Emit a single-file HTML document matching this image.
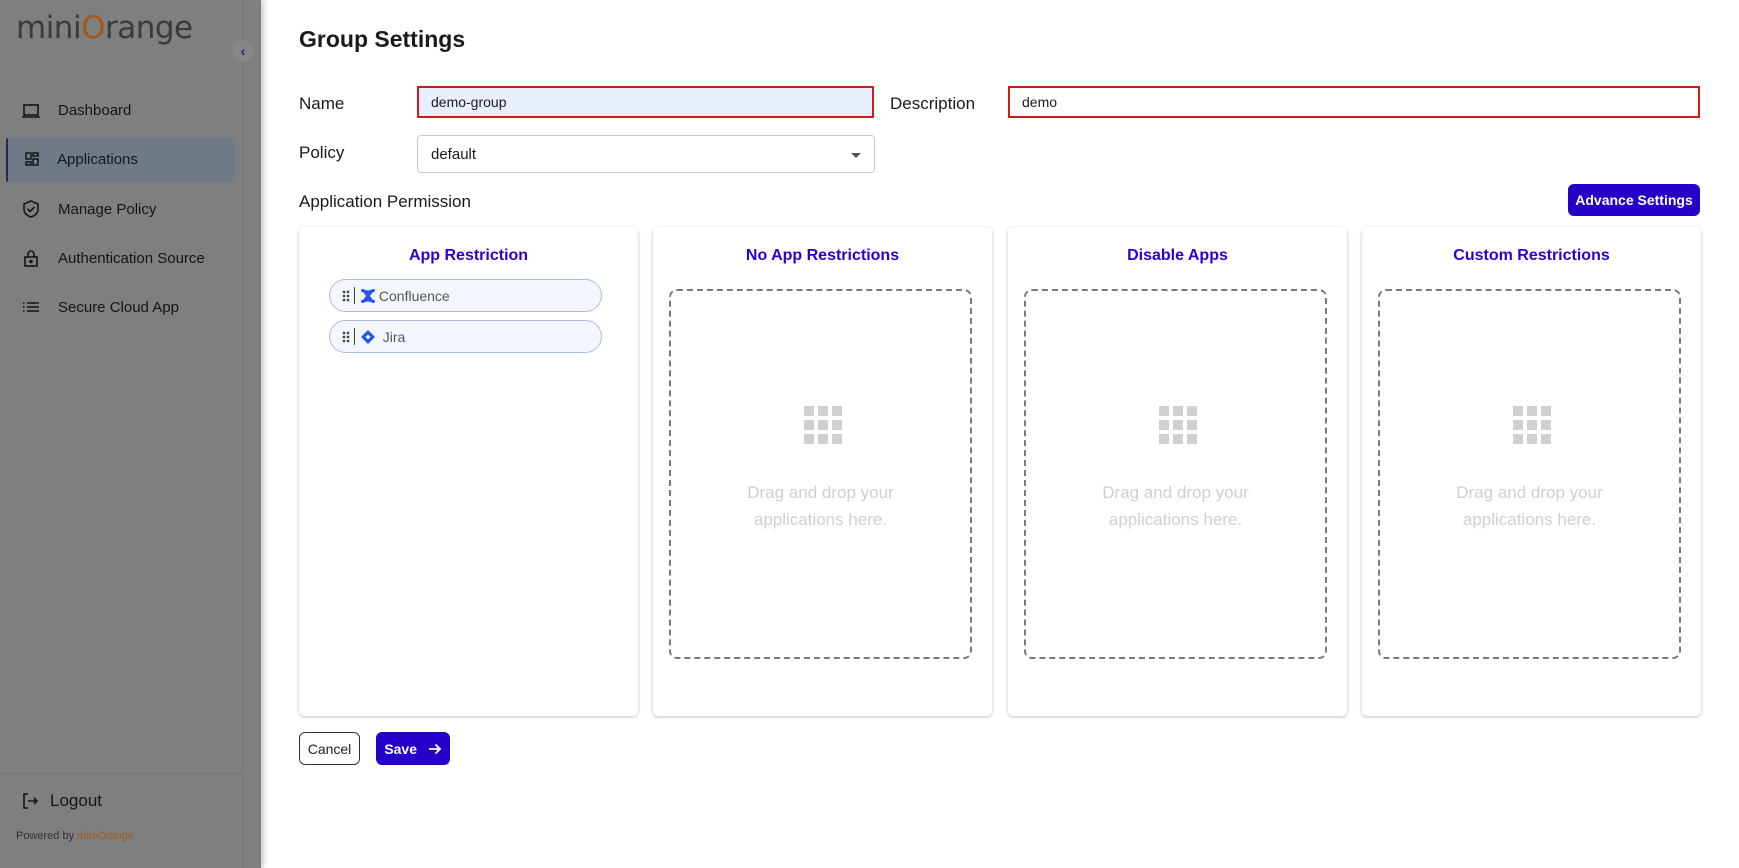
<!DOCTYPE html>
<html><head><meta charset="utf-8"><style>
*{box-sizing:border-box;margin:0;padding:0}
body{width:1739px;height:868px;overflow:hidden;background:#fff;font-family:"Liberation Sans",sans-serif;color:#1a1a1a;position:relative}
.side{position:absolute;left:0;top:0;width:261px;height:868px;background:#7f7f7f;box-shadow:2px 0 6px rgba(0,0,0,.25)}
.side .line{position:absolute;left:242px;top:0;width:1px;height:868px;background:#777}
.logo{position:absolute;left:16px;top:10px;font-size:31px;color:#3a3a3a;letter-spacing:-0.5px;font-family:"DejaVu Sans",sans-serif}
.logo b{color:#a0581a;font-weight:normal}
.coll{position:absolute;left:232px;top:40px;width:22px;height:22px;border-radius:50%;background:#868686;color:#1a1aa0;font-size:14px;text-align:center;line-height:22px;font-weight:bold}
.item{position:absolute;left:22px;font-size:15px;color:#151515;display:flex;align-items:center}
.item svg{margin-right:18px}
.hl{position:absolute;left:6px;top:138px;width:229px;height:44px;background:#6f7a86;border-left:2px solid #1c2a6a;border-radius:2px}
.divl{position:absolute;left:0;top:773px;width:243px;height:1px;background:#767676}
h1{position:absolute;left:299px;top:26px;font-size:23px;font-weight:bold;color:#1a1a1a}
.lbl{position:absolute;font-size:17px;color:#1a1a1a}
.inp{position:absolute;border:2px solid #d11a1a;font-size:14px;padding-left:12px;display:flex;align-items:center}
.sel{position:absolute;left:417px;top:135px;width:458px;height:38px;border:1px solid #c8c8c8;border-radius:4px;font-size:15px;padding-left:13px;display:flex;align-items:center}
.sel:after{content:"";position:absolute;right:13px;top:17px;border:5px solid transparent;border-top-color:#555}
.adv{position:absolute;left:1568px;top:184px;width:132px;height:32px;background:#2600c9;color:#fff;border-radius:6px;font-size:14px;font-weight:bold;display:flex;align-items:center;justify-content:center}
.card{position:absolute;top:227px;width:339px;height:489px;background:#fff;border-radius:5px;box-shadow:0 1px 3px rgba(0,0,0,.25)}
.card h3{position:absolute;top:20px;width:100%;text-align:center;font-size:16px;color:#2a00d6;font-weight:bold}
.dash{position:absolute;left:16px;top:62px;width:303px;height:370px;border:2px dashed #7a7a7a;border-radius:8px}
.grid{position:absolute;left:133px;top:115px;width:38px;height:38px;display:grid;grid-template-columns:repeat(3,10px);grid-gap:4px}
.grid i{background:#d0d0d0;width:10px;height:10px}
.dt{position:absolute;left:0;top:188px;width:100%;text-align:center;color:#cfcfcf;font-size:17px;line-height:27px}
.pill{position:absolute;left:30px;width:273px;height:33px;border:1px solid #a9bedc;border-radius:17px;background:#f3f7fd;display:flex;align-items:center;padding-left:12px;font-size:14px;color:#555}
.pill .h{display:inline-block;width:8px;height:12px;background:radial-gradient(circle,#444 1.2px,transparent 1.5px) 0 0/4px 4px;margin-right:4px}
.pill .sep{width:1px;height:17px;background:#444;margin-right:6px}
.btn{position:absolute;top:732px;height:33px;border-radius:6px;font-size:14px;display:flex;align-items:center;justify-content:center}
</style></head><body>
<div class="side">
<div class="line"></div>
<div class="logo">mini<b>O</b>range</div>
<div class="coll">&#8249;</div>
<div class="hl"></div>
<div class="item" style="top:102px"><svg width="18" height="16" viewBox="0 0 18 16" fill="none" stroke="#151515" stroke-width="1.6"><rect x="2" y="2" width="14" height="10"/><path d="M0 14h18"/></svg>Dashboard</div>
<div class="item" style="top:151px;left:25px"><svg width="14" height="16" viewBox="0 0 14 16" fill="none" stroke="#151515" stroke-width="1.5"><rect x="1" y="1" width="5" height="6"/><rect x="8" y="1" width="5" height="3"/><rect x="1" y="10" width="5" height="3"/><rect x="8" y="7" width="5" height="6"/></svg><span>Applications</span></div>
<div class="item" style="top:200px"><svg width="18" height="18" viewBox="0 0 18 18" fill="none" stroke="#151515" stroke-width="1.6"><path d="M9 1l7 3v5c0 4-3 7-7 8-4-1-7-4-7-8V4z"/><path d="M5.5 9l2.5 2.5 4.5-4.5"/></svg>Manage Policy</div>
<div class="item" style="top:249px"><svg width="18" height="18" viewBox="0 0 18 18" fill="none" stroke="#151515" stroke-width="1.6"><rect x="3" y="8" width="12" height="9"/><path d="M6 8V5a3 3 0 016 0v3"/><circle cx="9" cy="12.5" r="1" fill="#151515"/></svg>Authentication Source</div>
<div class="item" style="top:298px"><svg width="18" height="18" viewBox="0 0 18 18" fill="none" stroke="#151515" stroke-width="1.6"><path d="M5 5h12M5 9h12M5 13h12M1 5h1.5M1 9h1.5M1 13h1.5"/></svg>Secure Cloud App</div>
<div class="divl"></div>
<div class="item" style="top:791px;font-size:17px"><svg width="16" height="18" viewBox="0 0 16 18" fill="none" stroke="#151515" stroke-width="1.6"><path d="M6 2H2v14h4M6 9h9M12 6l3 3-3 3"/></svg><span style="margin-left:-6px">Logout</span></div>
<div style="position:absolute;left:16px;top:830px;font-size:11px;color:#333">Powered by <span style="color:#a35a1a">miniOrange</span></div>
</div>

<h1>Group Settings</h1>
<div class="lbl" style="left:299px;top:94px">Name</div>
<div class="inp" style="left:417px;top:86px;width:457px;height:32px;background:#e8eefb">demo-group</div>
<div class="lbl" style="left:890px;top:94px">Description</div>
<div class="inp" style="left:1008px;top:86px;width:692px;height:32px">demo</div>
<div class="lbl" style="left:299px;top:143px">Policy</div>
<div class="sel">default</div>
<div class="lbl" style="left:299px;top:192px">Application Permission</div>
<div class="adv">Advance Settings</div>

<div class="card" style="left:299px"><h3>App Restriction</h3>
<div class="pill" style="top:52px"><span class="h"></span><span class="sep"></span><svg width="14" height="14" viewBox="0 0 14 14"><path d="M1.5 1.5c4 2 7 2 11 0M1.5 12.5c4-2 7-2 11 0M3 2l8 10M11 2L3 12" stroke="#2357e8" stroke-width="3" fill="none" stroke-linecap="round"/></svg>&nbsp;Confluence</div>
<div class="pill" style="top:93px"><span class="h"></span><span class="sep"></span><svg width="14" height="14" viewBox="0 0 14 14"><path d="M7 0l7 7-7 7-7-7z" fill="#2357e8"/><path d="M7 4.5l2.5 2.5L7 9.5 4.5 7z" fill="#fff"/></svg>&nbsp;&nbsp;Jira</div>
</div>
<div class="card" style="left:653px"><h3>No App Restrictions</h3><div class="dash"><div class="grid"><i></i><i></i><i></i><i></i><i></i><i></i><i></i><i></i><i></i></div><div class="dt">Drag and drop your<br>applications here.</div></div></div>
<div class="card" style="left:1008px"><h3>Disable Apps</h3><div class="dash"><div class="grid"><i></i><i></i><i></i><i></i><i></i><i></i><i></i><i></i><i></i></div><div class="dt">Drag and drop your<br>applications here.</div></div></div>
<div class="card" style="left:1362px"><h3>Custom Restrictions</h3><div class="dash"><div class="grid"><i></i><i></i><i></i><i></i><i></i><i></i><i></i><i></i><i></i></div><div class="dt">Drag and drop your<br>applications here.</div></div></div>

<div class="btn" style="left:299px;width:61px;border:1px solid #333;color:#222">Cancel</div>
<div class="btn" style="left:376px;width:74px;background:#2600c9;color:#fff;font-weight:bold">Save&nbsp;&nbsp;&nbsp;<svg width="13" height="12" viewBox="0 0 13 12" fill="none" stroke="#fff" stroke-width="1.8"><path d="M0 6h11M6.5 1.5L11 6l-4.5 4.5"/></svg></div>
</body></html>
